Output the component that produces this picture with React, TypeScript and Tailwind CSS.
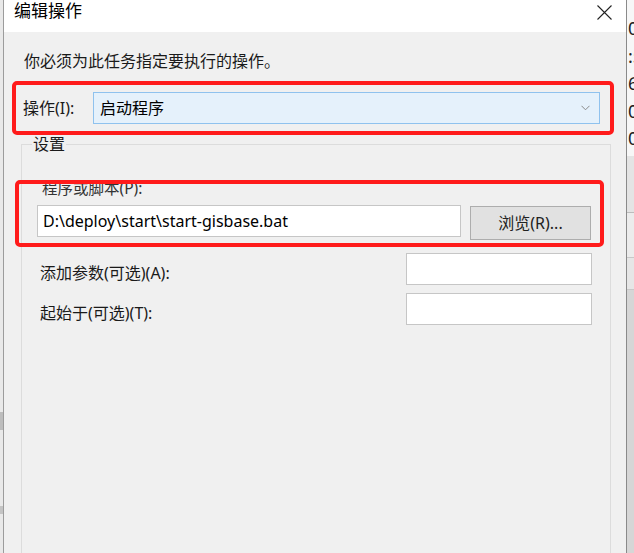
import React from 'react';

const font = { fontFamily: '"Noto Sans", "Noto Sans CJK SC", sans-serif' };

const TextBox = ({ className = '', children }: { className?: string; children?: React.ReactNode }) => (
  <div className={`h-[32px] bg-white border border-[#c6c6c6] flex items-center px-[5px] text-[16px] text-black ${className}`}>
    {children}
  </div>
);

export default function App() {
  const digits = ['0', ':5', '6', '0', '0'];

  return (
    <div className="relative w-[634px] h-[553px] overflow-hidden flex bg-[#f0f0f0] text-[#1a1a1a]" style={font}>
      {/* background window, left */}
      <div className="w-[3px] h-full bg-[#e9e9e9] flex flex-col">
        <div className="h-[412px]" />
        <div className="h-[18px] bg-[#bdbdbd]" />
        <div className="h-[76px]" />
        <div className="h-[8px] bg-[#c4c4c4]" />
      </div>

      {/* dialog */}
      <div className="w-[624px] h-full border-l border-[#9c9c9c] border-r border-r-[#8a8a8a] flex flex-col">
        <div className="h-[32px] bg-white flex items-start justify-between pl-[10px] pr-[14px]">
          <span className="text-[17px] leading-[22px] text-black">编辑操作</span>
          <svg width="15" height="15" viewBox="0 0 15 15" className="mt-[5px]">
            <path d="M0.5 0.5 L14.5 14.5 M14.5 0.5 L0.5 14.5" stroke="#222" strokeWidth="1.1" />
          </svg>
        </div>

        <div className="flex-1 flex flex-col pl-[17px] pr-[15px]">
          <div className="mt-[18px] text-[16px] leading-[22px] pl-[3px]">你必须为此任务指定要执行的操作。</div>

          <div className="mt-[20px] flex items-center">
            <span className="w-[72px] pl-[2px] text-[16px]">操作(I):</span>
            <div className="w-[507px] h-[32px] bg-[#e5f1fb] border border-[#8fc2ee] flex items-center justify-between pl-[6px] pr-[9px] text-[16px] text-black">
              <span>启动程序</span>
              <svg width="9" height="6" viewBox="0 0 9 6">
                <path d="M0.5 0.8 L4.5 4.8 L8.5 0.8" stroke="#8a8a8a" strokeWidth="1" fill="none" />
              </svg>
            </div>
          </div>

          {/* 设置 group */}
          <div className="mt-[20px] w-[590px] flex-1 border border-b-0 border-[#dcdcdc] flex flex-col">
            <div className="-mt-[12px] ml-[10px] self-start bg-[#f0f0f0] px-[1px] text-[16px] leading-[22px]">设置</div>

            <div className="mt-[23px] pl-[20px] text-[15.5px] leading-[20px] text-[#333]">程序或脚本(P):</div>
            <div className="mt-[7px] flex items-start pl-[15px]">
              <TextBox className="w-[424px]">D:\deploy\start\start-gisbase.bat</TextBox>
              <div className="ml-[9px] mt-[1px] w-[121px] h-[34px] bg-[#e1e1e1] border border-[#adadad] flex items-center justify-center text-[16px] text-[#222]">
                浏览(R)...
              </div>
            </div>

            <div className="mt-[13px] flex items-center">
              <span className="w-[384px] pl-[18px] pt-[8px] text-[16px]">添加参数(可选)(A):</span>
              <TextBox className="w-[186px]" />
            </div>
            <div className="mt-[8px] flex items-center">
              <span className="w-[384px] pl-[18px] pt-[8px] text-[16px]">起始于(可选)(T):</span>
              <TextBox className="w-[186px]" />
            </div>
          </div>
        </div>
      </div>

      {/* background window, right */}
      <div className="flex-1 h-full flex flex-col overflow-hidden">
        <div className="h-[156px] bg-[#f7f7f7] flex flex-col pt-[15px] text-[18px] leading-[27.5px] text-[#222] whitespace-nowrap">
          {digits.map((d, i) => (
            <span key={i} className="pl-[1px]">{d}</span>
          ))}
        </div>
        <div className="h-[57px] bg-[#e4e4e4] border-b border-[#bcbcbc]" />
        <div className="h-[45px] bg-[#ececec] border-b border-[#c8c8c8]" />
        <div className="h-[32px] bg-[#e6e6e6] border-b border-[#c8c8c8]" />
        <div className="flex-1 bg-[#d6d6d6]" />
      </div>

      {/* red annotation boxes */}
      <div className="absolute left-[12px] top-[81px] w-[602px] h-[54px] border-[4px] border-[#ff1b1b] rounded-[5px]" />
      <div className="absolute left-[15px] top-[180px] w-[589px] h-[67px] border-[4px] border-[#ff1b1b] rounded-[5px]" />
    </div>
  );
}
